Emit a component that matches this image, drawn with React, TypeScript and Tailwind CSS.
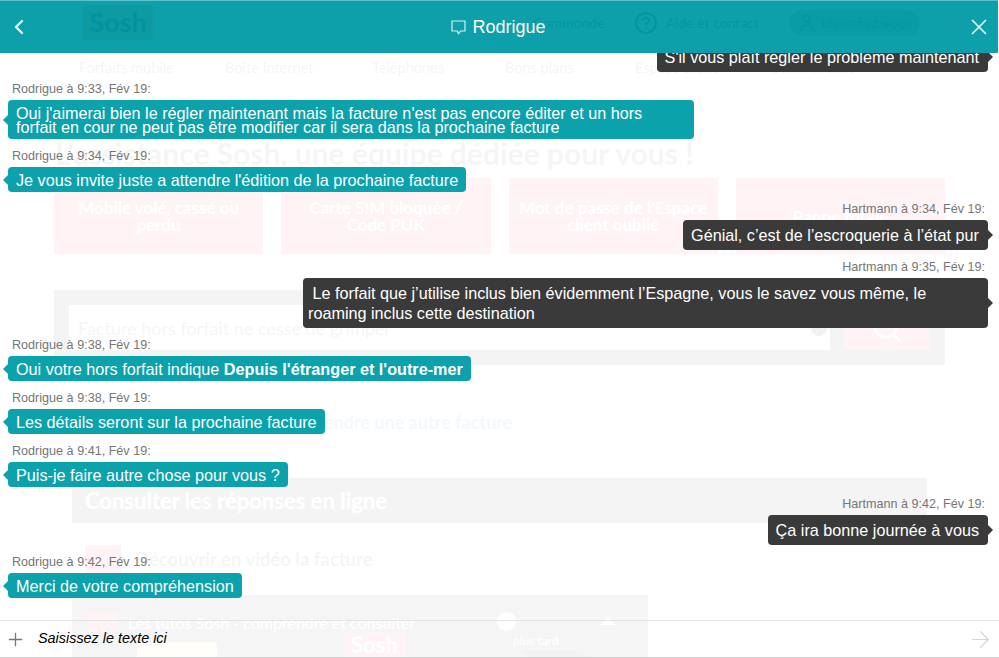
import { ArrowRight, ChevronLeft, CircleHelp, Plus, Search, User, X } from 'lucide-react';
import type { ReactNode } from 'react';

interface Message {
  author: string;
  time: string;
  body: ReactNode;
  tight?: boolean;
}

const MESSAGES: Message[] = [
  { author: 'Hartmann', time: '9:32', body: "S'il vous plaît régler le problème maintenant" },
  {
    author: 'Rodrigue',
    time: '9:33',
    body: "Oui j'aimerai bien le régler maintenant mais la facture n'est pas encore éditer et un hors forfait en cour ne peut pas être modifier car il sera dans la prochaine facture",
  },
  { author: 'Rodrigue', time: '9:34', body: "Je vous invite juste a attendre l'édition de la prochaine facture" },
  { author: 'Hartmann', time: '9:34', body: 'Génial, c’est de l’escroquerie à l’état pur' },
  {
    author: 'Hartmann',
    time: '9:35',
    tight: true,
    body: ' Le forfait que j’utilise inclus bien évidemment l’Espagne, vous le savez vous même, le roaming inclus cette destination',
  },
  {
    author: 'Rodrigue',
    time: '9:38',
    body: (
      <>
        Oui votre hors forfait indique <b className="font-bold">Depuis l'étranger et l'outre-mer</b>
      </>
    ),
  },
  { author: 'Rodrigue', time: '9:38', body: 'Les détails seront sur la prochaine facture' },
  { author: 'Rodrigue', time: '9:41', body: 'Puis-je faire autre chose pour vous ?' },
  { author: 'Hartmann', time: '9:42', body: 'Ça ira bonne journée à vous' },
  { author: 'Rodrigue', time: '9:42', body: 'Merci de votre compréhension' },
];

const NAV_LINKS = ['Forfaits mobile', 'Boîte Internet', 'Téléphones', 'Bons plans', 'Espace client', 'Communauté'];

const HELP_CARDS = ['Mobile volé, cassé ou perdu', 'Carte SIM bloquée / Code PUK', "Mot de passe de l'Espace client oublié", 'Panne totale'];

function Bubble({ message }: { message: Message }) {
  const agent = message.author === 'Rodrigue';
  return (
    <div className={agent ? 'flex flex-col items-start pl-2' : 'flex flex-col items-end pr-[11px]'}>
      <p className={`text-[12.6px] leading-[15px] text-[#767676] ${agent ? 'pl-1' : 'pr-[3px]'}`}>
        {message.author} à {message.time}, Fév 19:
      </p>
      <div
        className={
          agent
            ? 'relative mt-[3px] max-w-[686px] rounded-[4px] bg-[#0ba2ac] py-[5.5px] pl-2 pr-2 text-[16.2px] leading-[14px] text-white'
            : `relative mt-[3px] max-w-[685px] rounded-[4px] bg-[#3a3a3a] py-[5px] pr-[9px] text-[16.2px] leading-[20px] text-white whitespace-pre-wrap ${message.tight ? 'pl-[5px]' : 'pl-2'}`
        }
      >
        {message.body}
        {agent ? (
          <span className="absolute -left-[5px] top-1/2 -mt-[5px] border-y-[5px] border-r-[5px] border-y-transparent border-r-[#0ba2ac]" />
        ) : (
          <span className="absolute -right-[5px] top-1/2 -mt-[5px] border-y-[5px] border-l-[5px] border-y-transparent border-l-[#3a3a3a]" />
        )}
      </div>
    </div>
  );
}

function BackgroundPage() {
  return (
    <div className="h-[658px] overflow-hidden font-['Lato',sans-serif] text-[#333]">
      {/* Top bar */}
      <div className="flex h-[45px] items-center pl-[83px] pr-[79px]">
        <div className="flex h-[35px] w-[70px] items-center justify-center bg-[#ff9a40] text-[27px] font-black text-[#222]">Sosh</div>
        <div className="ml-auto flex items-center text-sm">
          <span>Commonde</span>
          <CircleHelp size={24} className="ml-[29px] mr-2" />
          <span>Aide et contact</span>
          <span className="ml-[30px] flex h-[26px] items-center gap-1 rounded-full bg-black/30 px-2">
            <User size={20} />
            Identifiez-vous
          </span>
        </div>
      </div>

      <nav className="grid grid-cols-[146px_147px_133px_130px_135px_auto] pl-[79px] pt-[13px] text-[14.5px] leading-5">
        {NAV_LINKS.map((link) => (
          <span key={link}>{link}</span>
        ))}
      </nav>

      <h1 className="pl-[55px] pt-[57px] text-[30px] font-bold leading-9 text-[#444]">L'assistance Sosh, une équipe dédiée pour vous !</h1>

      <div className="mx-[54px] mt-[7px] grid grid-cols-4 gap-[18px]">
        {HELP_CARDS.map((card) => (
          <div key={card} className="flex h-[76px] items-center justify-center bg-[#ff1f5a] px-2 text-center text-[17px] font-bold leading-[17px] text-white">
            {card}
          </div>
        ))}
      </div>

      <div className="mx-[54px] mt-6 flex h-3 justify-end pr-[17px]">
        <span className="bg-[#ffd000] px-2 text-[11px] leading-3 text-black">407/500 caractères</span>
      </div>
      <div className="mx-[54px] flex h-[75px] items-center gap-[14px] bg-[#333] px-[15px]">
        <div className="flex h-[45px] flex-1 items-center justify-between bg-white pl-[9px] pr-[3px] text-lg">
          Facture hors forfait ne cesse de grimper
          <span className="h-4 w-4 rounded-full bg-black" />
        </div>
        <div className="flex h-[45px] w-[86px] items-center justify-center bg-[#ff1f5a] text-white">
          <Search size={32} />
        </div>
      </div>

      <p className="pl-[270px] pt-[43px] text-lg font-bold text-[#0a80d0]">Comprendre une autre facture</p>

      <div className="mx-[72px] mt-[42px] flex h-[45px] items-center bg-[#333] px-[13px] text-[22px] font-bold text-white">Consulter les réponses en ligne</div>

      <div className="ml-[85px] mt-[22px] flex items-start gap-[14px]">
        <div className="h-9 w-9 bg-[#ff1f5a]" />
        <span className="text-[18.5px] font-bold leading-7">Découvrir en vidéo la facture</span>
      </div>

      {/* Video thumbnail */}
      <div className="relative ml-[72px] mt-[14px] h-[70px] w-[576px] overflow-hidden bg-[#444] pl-[56px] pt-[18px] text-base leading-5 text-white">
        Les tutos Sosh - comprendre et consulter
        <span className="absolute left-[16px] top-[17px] h-5 w-[29px] bg-[#ff1f5a]" />
        <span className="absolute left-[65px] top-[47px] h-7 w-20 bg-[#ffe98a]" />
        <span className="absolute left-[271px] top-[38px] bg-[#ff1f5a] px-2 text-[22px] font-black leading-[24px]">Sosh</span>
        <span className="absolute left-[425px] top-[17px] h-[19px] w-[19px] rounded-full bg-white" />
        <span className="absolute left-[441px] top-[38px] text-xs">plus tard</span>
        <span className="absolute left-[528px] top-[22px] border-x-[8px] border-b-[8px] border-x-transparent border-b-white" />
        <span className="absolute left-[448px] top-[55px] h-[15px] w-[90px] bg-black [clip-path:polygon(0_0,60%_0,100%_100%,30%_100%)]" />
      </div>
    </div>
  );
}

export default function App() {
  return (
    <div className="relative h-[658px] w-[999px] overflow-hidden bg-white font-['Liberation_Sans',Arial,sans-serif]">
      <BackgroundPage />

      {/* Chat overlay */}
      <div className="absolute inset-0 flex flex-col">
        <header className="flex h-[53px] w-[998px] shrink-0 items-center justify-between border-t border-[#5cc0c8] bg-[#009ba7]/95 pl-[7px] pr-[6px] text-white">
          <ChevronLeft size={24} strokeWidth={2.4} className="text-[#dff6f7]" />
          <div className="flex items-center gap-[6px] text-lg">
            <svg width="15" height="15" viewBox="0 0 15 15" fill="none" stroke="#d5f1f3" strokeWidth="1.2" strokeLinejoin="round">
              <path d="M1 1h13v10h-4.5l-2 2.8-1.2-2.8H1z" />
            </svg>
            Rodrigue
          </div>
          <X size={26} strokeWidth={1.6} className="text-[#dff6f7]" />
        </header>

        <div className="flex min-h-0 flex-1 flex-col justify-end gap-[10px] overflow-hidden bg-white/95 pb-[22px]">
          {MESSAGES.map((message, i) => (
            <Bubble key={i} message={message} />
          ))}
        </div>

        <footer className="flex h-[38px] shrink-0 items-center border-y border-t-[#e4e4e4] border-b-[#cfcfcf] bg-white/95 pl-[5px] pr-[5px]">
          <Plus size={21} strokeWidth={1.5} className="text-[#777]" />
          <span className="ml-[12px] text-[14.4px] italic text-black">Saisissez le texte ici</span>
          <ArrowRight size={27} strokeWidth={1.1} className="ml-auto text-[#d4d4d4]" />
        </footer>
      </div>
    </div>
  );
}
